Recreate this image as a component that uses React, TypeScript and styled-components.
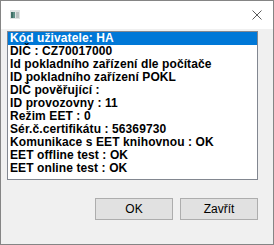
import React from "react";
import styled, { createGlobalStyle } from "styled-components";

const GlobalStyle = createGlobalStyle`
  html, body {
    margin: 0;
    padding: 0;
    background: #f0f0f0;
  }
`;

const items = [
  "Kód uživatele: HA",
  "DIČ : CZ70017000",
  "Id pokladního zařízení dle počítače",
  "ID pokladního zařízení POKL",
  "DIČ pověřující :",
  "ID provozovny : 11",
  "Režim EET : 0",
  "Sér.č.certifikátu : 56369730",
  "Komunikace s EET knihovnou : OK",
  "EET offline test : OK",
  "EET online test : OK",
];

export default function App() {
  return (
    <>
      <GlobalStyle />
      <Window>
        <TitleBar>
          <AppIcon viewBox="0 0 10 9" width={10} height={9}>
            <rect x="0" y="0" width="10" height="9" fill="#dfe3e3" />
            <rect x="1" y="2" width="4" height="6" fill="#5f8f86" />
            <rect x="1" y="2" width="2" height="6" fill="#3f6f67" />
            <rect x="6" y="2" width="3" height="6" fill="#b9c0c0" />
          </AppIcon>
          <Close viewBox="0 0 10 10" width={10} height={10}>
            <path d="M0.5 0.5 L9.5 9.5 M9.5 0.5 L0.5 9.5" stroke="#5a5a5a" strokeWidth="1" />
          </Close>
        </TitleBar>
        <Body>
          <ListBox>
            {items.map((text, i) => (
              <Row key={text} selected={i === 0}>
                {text}
              </Row>
            ))}
          </ListBox>
          <Buttons>
            <Button>OK</Button>
            <Button>Zavřít</Button>
          </Buttons>
        </Body>
      </Window>
    </>
  );
}

const Window = styled.div`
  width: 274px;
  height: 245px;
  box-sizing: border-box;
  border: 1px solid #858585;
  background: #f0f0f0;
  display: flex;
  flex-direction: column;
`;

const TitleBar = styled.div`
  height: 28px;
  background: #ffffff;
  display: flex;
  align-items: center;
  justify-content: space-between;
  padding: 0 11px 0 9px;
  flex-shrink: 0;
`;

const AppIcon = styled.svg`
  display: block;
  margin-top: -1px;
`;

const Close = styled.svg`
  display: block;
`;

const Body = styled.div`
  flex: 1;
  padding: 2px 15px 0 6px;
  display: flex;
  flex-direction: column;
`;

const ListBox = styled.div`
  height: 149px;
  box-sizing: border-box;
  border: 1px solid #828790;
  background: #ffffff;
  overflow: hidden;
`;

const Row = styled.div<{ selected?: boolean }>`
  height: 13px;
  line-height: 13px;
  padding-left: 2px;
  font-family: "Liberation Sans", Arial, sans-serif;
  font-weight: bold;
  font-size: 12px;
  letter-spacing: 0.1px;
  white-space: nowrap;
  color: ${({ selected }) => (selected ? "#ffffff" : "#000000")};
  background: ${({ selected }) => (selected ? "#0078d7" : "transparent")};
`;

const Buttons = styled.div`
  display: flex;
  justify-content: flex-end;
  gap: 7px;
  margin-top: 18px;
`;

const Button = styled.button`
  width: 78px;
  height: 22px;
  box-sizing: border-box;
  border: 1px solid #adadad;
  background: #e1e1e1;
  font-family: "Liberation Sans", Arial, sans-serif;
  font-size: 12px;
  color: #000000;
  padding: 0;
`;
